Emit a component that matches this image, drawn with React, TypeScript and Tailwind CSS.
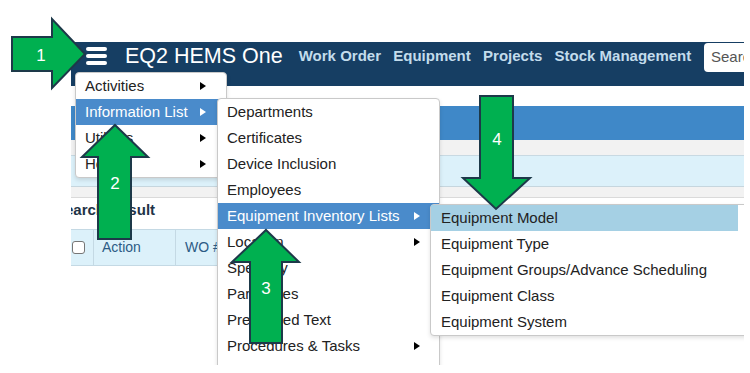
const navLinks = ["Work Order", "Equipment", "Projects", "Stock Management"];

const topMenu = [
  { label: "Activities", sub: true },
  { label: "Information List", sub: true, active: true },
  { label: "Utilities", sub: true },
  { label: "Help", sub: true },
];

const infoMenu = [
  { label: "Departments" },
  { label: "Certificates" },
  { label: "Device Inclusion" },
  { label: "Employees" },
  { label: "Equipment Inventory Lists", sub: true, active: true },
  { label: "Location", sub: true },
  { label: "Specialty" },
  { label: "Part Types" },
  { label: "Predefined Text" },
  { label: "Procedures & Tasks", sub: true },
];

const equipMenu = [
  "Equipment Model",
  "Equipment Type",
  "Equipment Groups/Advance Scheduling",
  "Equipment Class",
  "Equipment System",
];

function Caret({ white }: { white?: boolean }) {
  return (
    <svg width="6" height="8" viewBox="0 0 6 8" className="shrink-0">
      <polygon points="0,0 6,4 0,8" fill={white ? "#ffffff" : "#000000"} />
    </svg>
  );
}

type Item = { label: string; sub?: boolean; active?: boolean };

function MenuRow({ item, pl, pr }: { item: Item; pl: string; pr: string }) {
  return (
    <div
      className={`flex h-[26px] items-center justify-between ${pl} ${pr} ${
        item.active ? "bg-[#4a8bcb] text-white" : "text-[#222]"
      }`}
    >
      <span className="whitespace-nowrap">{item.label}</span>
      {item.sub && <Caret white={item.active} />}
    </div>
  );
}

// green call-out arrows drawn over the screenshot
function Callouts() {
  const fill = "#00b050";
  const stroke = "#1d3949";
  return (
    <svg
      width="750"
      height="373"
      viewBox="0 0 750 373"
      className="pointer-events-none absolute left-0 top-0"
    >
      <g fill={fill} stroke={stroke} strokeWidth="2" strokeLinejoin="miter">
        <polygon points="12,37 52,37 52,19 85,54 52,88 52,71 12,71" />
        <polygon points="115,125 148,157 131,157 131,239 98,239 98,157 82,157" />
        <polygon points="266,230 299,262 282,262 282,343 250,343 250,262 232,262" />
        <polygon points="480,96 513,96 513,178 530,178 496,209 463,178 480,178" />
      </g>
      <g
        fill="#ffffff"
        fontSize="17"
        textAnchor="middle"
        fontFamily="'Liberation Sans', Arial, sans-serif"
      >
        <text x="41" y="61">1</text>
        <text x="115" y="189">2</text>
        <text x="266" y="294">3</text>
        <text x="497" y="145">4</text>
      </g>
    </svg>
  );
}

export default function App() {
  return (
    <div className="relative h-[373px] w-[750px] overflow-hidden bg-white pl-[71px] pt-[42px] font-['Liberation_Sans',Arial,sans-serif]">
      <div className="relative h-[323px] w-[673px] overflow-hidden">
        {/* top nav */}
        <header className="flex h-[44px] items-start bg-[#163e63] pl-[15px]">
          <div className="flex h-[28px] shrink-0 items-center">
            <div className="flex w-[21px] flex-col gap-[3px]">
              <span className="h-[4px] rounded-[2px] bg-white" />
              <span className="h-[4px] rounded-[2px] bg-white" />
              <span className="h-[4px] rounded-[2px] bg-white" />
            </div>
            <span className="ml-[18px] whitespace-nowrap text-[21.5px] text-white">
              EQ2 HEMS One
            </span>
            <nav className="ml-[16px] flex gap-[12.3px] whitespace-nowrap text-[15px] font-bold text-[#c3dcec]">
              {navLinks.map((l) => (
                <span key={l}>{l}</span>
              ))}
            </nav>
          </div>
          <div className="ml-[12.7px] mt-[1px] flex h-[29px] w-[120px] shrink-0 items-center rounded-l-[4px] bg-white pl-[7px] text-[15px] text-[#555]">
            Search...
          </div>
        </header>

        {/* page body */}
        <div className="mt-[20px] h-[34px] bg-[#3f88c8]" />
        <div className="h-[16px] border-b border-[#c8d9e2] bg-[#f2f2f2]" />
        <div className="h-[31px] border-b border-[#c6d6de] bg-[#dcf1fa]" />
        <div className="h-[11px] border-b border-[#dadada] bg-[#f2f2f2]" />
        <div className="h-[31px] pt-[3px]">
          <span className="-ml-[16px] block whitespace-nowrap text-[15px] font-bold leading-[18px] text-[#1f3347]">
            Search Result
          </span>
        </div>
        <div className="flex h-[37px] border-y border-[#c4d9e4] bg-[#dcf1fa] text-[14px] text-[#2c5b85]">
          <div className="flex w-[23px] items-center border-r border-[#c4d9e4] pl-[1px]">
            <span className="h-[13px] w-[13px] rounded-[3px] border border-[#767676] bg-white" />
          </div>
          <div className="flex w-[82px] items-center border-r border-[#c4d9e4] pl-[8px]">Action</div>
          <div className="flex items-center pl-[9px]">WO #</div>
        </div>

        {/* main menu */}
        <div className="absolute left-[4px] top-[30px] w-[152px] rounded-[4px] border border-[#c9c9c9] bg-white text-[15px] shadow-[0_2px_4px_rgba(0,0,0,0.12)]">
          {topMenu.map((it) => (
            <MenuRow key={it.label} item={it} pl="pl-[9px]" pr="pr-[20px]" />
          ))}
        </div>

        {/* information list submenu */}
        <div className="absolute left-[146px] top-[56px] h-[300px] w-[223px] rounded-[4px] border border-[#c9c9c9] bg-white text-[15px] shadow-[0_2px_4px_rgba(0,0,0,0.12)]">
          {infoMenu.map((it) => (
            <MenuRow key={it.label} item={it} pl="pl-[9px]" pr="pr-[19px]" />
          ))}
        </div>

        {/* equipment inventory submenu */}
        <div className="absolute left-[359px] top-[162px] w-[330px] rounded-[4px] border border-[#c9c9c9] bg-white text-[15px] text-[#222] shadow-[0_2px_4px_rgba(0,0,0,0.12)]">
          {equipMenu.map((l, i) => (
            <div
              key={l}
              className={`flex h-[26px] w-[307px] items-center whitespace-nowrap pl-[10px] ${
                i === 0 ? "bg-[#a5d0e4]" : ""
              }`}
            >
              {l}
            </div>
          ))}
        </div>
      </div>

      <Callouts />
    </div>
  );
}
